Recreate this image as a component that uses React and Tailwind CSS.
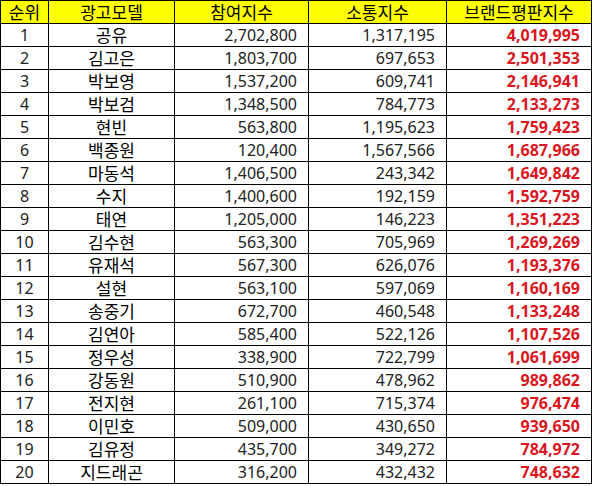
import React from "react";

const rows = [
  ["1", "공유", "2,702,800", "1,317,195", "4,019,995"],
  ["2", "김고은", "1,803,700", "697,653", "2,501,353"],
  ["3", "박보영", "1,537,200", "609,741", "2,146,941"],
  ["4", "박보검", "1,348,500", "784,773", "2,133,273"],
  ["5", "현빈", "563,800", "1,195,623", "1,759,423"],
  ["6", "백종원", "120,400", "1,567,566", "1,687,966"],
  ["7", "마동석", "1,406,500", "243,342", "1,649,842"],
  ["8", "수지", "1,400,600", "192,159", "1,592,759"],
  ["9", "태연", "1,205,000", "146,223", "1,351,223"],
  ["10", "김수현", "563,300", "705,969", "1,269,269"],
  ["11", "유재석", "567,300", "626,076", "1,193,376"],
  ["12", "설현", "563,100", "597,069", "1,160,169"],
  ["13", "송중기", "672,700", "460,548", "1,133,248"],
  ["14", "김연아", "585,400", "522,126", "1,107,526"],
  ["15", "정우성", "338,900", "722,799", "1,061,699"],
  ["16", "강동원", "510,900", "478,962", "989,862"],
  ["17", "전지현", "261,100", "715,374", "976,474"],
  ["18", "이민호", "509,000", "430,650", "939,650"],
  ["19", "김유정", "435,700", "349,272", "784,972"],
  ["20", "지드래곤", "316,200", "432,432", "748,632"],
];

const cell = "border border-black h-[23px] p-0 leading-none";

const App = () => {
  return (
    <div className="w-[592px] h-[486px] bg-white font-['Noto_Sans','Noto_Sans_CJK_KR',sans-serif] text-[16px] text-black">
      <table className="table-fixed border-collapse w-[591px]">
        <colgroup>
          <col className="w-[48px]" />
          <col className="w-[126px]" />
          <col className="w-[134px]" />
          <col className="w-[138px]" />
          <col className="w-[145px]" />
        </colgroup>
        <thead>
          <tr className="bg-[#ffff00] text-[17px]">
            <th className={`${cell} font-normal text-center`}>순위</th>
            <th className={`${cell} font-normal text-center`}>광고모델</th>
            <th className={`${cell} font-normal text-center`}>참여지수</th>
            <th className={`${cell} font-normal text-center`}>소통지수</th>
            <th className={`${cell} font-normal text-center`}>브랜드평판지수</th>
          </tr>
        </thead>
        <tbody>
          {rows.map((r) => (
            <tr key={r[0]}>
              <td className={`${cell} text-center text-[#222]`}>{r[0]}</td>
              <td className={`${cell} text-center text-[17px]`}>{r[1]}</td>
              <td className={`${cell} text-right pr-[11px] text-[#222]`}>{r[2]}</td>
              <td className={`${cell} text-right pr-[11px] text-[#222]`}>{r[3]}</td>
              <td className={`${cell} text-right pr-[11px] font-bold text-[#dc1620]`}>
                {r[4]}
              </td>
            </tr>
          ))}
        </tbody>
      </table>
    </div>
  );
};

export default App;
